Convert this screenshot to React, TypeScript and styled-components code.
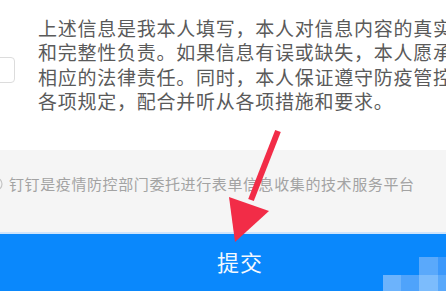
import React from "react";
import styled, { createGlobalStyle } from "styled-components";

const Global = createGlobalStyle`
  html, body { margin: 0; padding: 0; background: #ffffff; }
  body { width: 446px; height: 291px; overflow: hidden; font-family: "Noto Sans CJK SC", "Noto Sans", sans-serif; }
  #root { width: 446px; height: 291px; }
`;

const Page = styled.div`
  position: relative;
  width: 446px;
  height: 291px;
  display: flex;
  flex-direction: column;
  overflow: hidden;
`;

const Agreement = styled.section`
  height: 150px;
  background: #ffffff;
  display: flex;
  align-items: flex-start;
  padding-top: 16px;
  box-sizing: border-box;
  overflow: hidden;
`;

const CheckBox = styled.div`
  flex: none;
  width: 26px;
  height: 26px;
  margin-left: -11px;
  margin-top: 41px;
  border: 1px solid #dcdcdc;
  border-radius: 4px;
  box-sizing: border-box;
  background: #fff;
`;

const Statement = styled.p`
  margin: 0 0 0 23px;
  width: 420px;
  font-size: 19px;
  letter-spacing: 0.75px;
  line-height: 24.4px;
  color: #5a5a5a;
  white-space: nowrap;
`;

const Notice = styled.section`
  height: 82px;
  background: #f5f5f5;
  display: flex;
  align-items: center;
  box-sizing: border-box;
  padding-bottom: 15px;
`;

const InfoIcon = styled.svg`
  flex: none;
  width: 4px;
  height: 14px;
  margin-right: 5px;
`;

const NoticeText = styled.span`
  font-size: 15px;
  letter-spacing: 0.6px;
  color: #a3a3a3;
  white-space: nowrap;
`;

const Divider = styled.div`
  height: 2px;
  background: #cfe4fb;
`;

const SubmitBar = styled.button`
  position: relative;
  flex: 1;
  border: none;
  margin: 0;
  padding: 0 0 4px 34px;
  background: #0a88fc;
  color: #f4f9ff;
  font-family: "Noto Sans CJK SC", "Noto Sans", sans-serif;
  font-size: 22px;
  letter-spacing: 1px;
  display: flex;
  align-items: center;
  justify-content: center;
  overflow: hidden;
`;

const Mosaic = styled.svg`
  position: absolute;
  right: 0;
  bottom: 0;
  width: 63px;
  height: 34px;
`;

const Arrow = styled.svg`
  position: absolute;
  left: 0;
  top: 0;
  width: 446px;
  height: 291px;
  pointer-events: none;
`;

export default function App() {
  return (
    <>
      <Global />
      <Page>
        <Agreement>
          <CheckBox />
          <Statement>
            上述信息是我本人填写，本人对信息内容的真实
            <br />
            和完整性负责。如果信息有误或缺失，本人愿承
            <br />
            相应的法律责任。同时，本人保证遵守防疫管控
            <br />
            各项规定，配合并听从各项措施和要求。
          </Statement>
        </Agreement>
        <Notice>
          <InfoIcon viewBox="0 0 4 14">
            <circle cx="-4" cy="7" r="6" fill="none" stroke="#c4c4c4" strokeWidth="1.2" />
          </InfoIcon>
          <NoticeText>钉钉是疫情防控部门委托进行表单信息收集的技术服务平台</NoticeText>
        </Notice>
        <Divider />
        <SubmitBar>
          提交
          <Mosaic viewBox="0 0 63 34">
            <rect x="36" y="0" width="19" height="18" fill="#5aa9fb" />
            <rect x="55" y="0" width="8" height="18" fill="#3b98fb" />
            <rect x="0" y="18" width="18" height="16" fill="#6cb3fc" />
            <rect x="18" y="18" width="18" height="16" fill="#4fa3fb" />
            <rect x="36" y="18" width="19" height="16" fill="#7cbcfc" />
            <rect x="55" y="18" width="8" height="16" fill="#58a8fb" />
          </Mosaic>
        </SubmitBar>
        <Arrow viewBox="0 0 446 291">
          <line x1="278" y1="131" x2="251" y2="200" stroke="#f22c47" strokeWidth="6" />
          <polygon points="229,197 269,211 235,242" fill="#f22c47" />
        </Arrow>
      </Page>
    </>
  );
}
